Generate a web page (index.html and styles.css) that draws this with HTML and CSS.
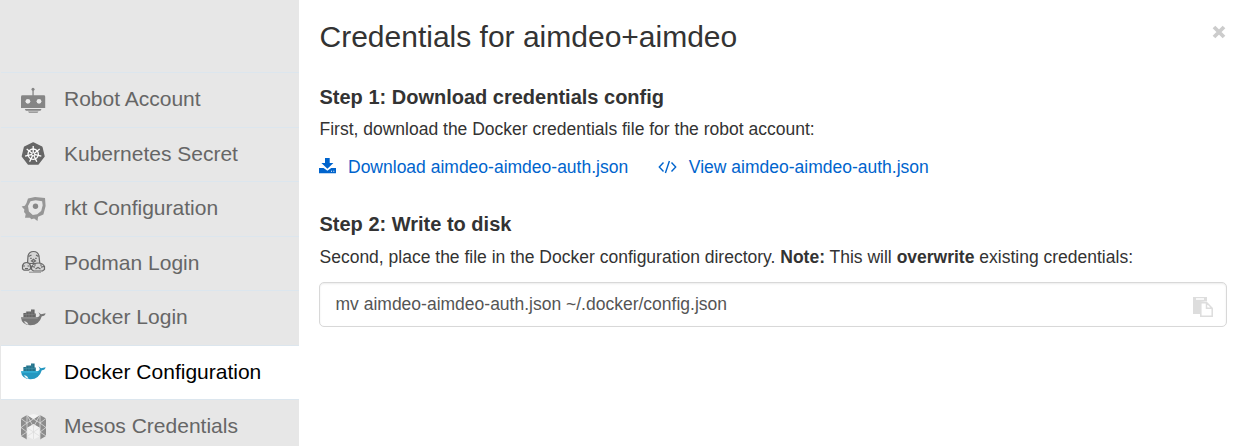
FILE: index.html
```html
<!DOCTYPE html>
<html lang="en">
<head>
<meta charset="utf-8">
<title>Credentials for aimdeo+aimdeo</title>
<link rel="stylesheet" href="styles.css">
</head>
<body>
<div class="dialog">
  <nav class="sidebar">
    <a class="tab"><svg class="tab-icon" viewBox="0 0 26 26"><g fill="#858585"><path d="M12.400 3h1.300v6h-1.300z"/><circle cx="13" cy="2.300" r="1.500"/><path d="M2.500 8.300h21.300q1.400 0 1.400 1.400v11.300H1V9.700q0-1.400 1.500-1.400z"/><path d="M4.800 22h16.700l-1 1.700H5.800zM8 24.400h10.500l-1 1.300H9z"/></g><g fill="#ebebeb"><circle cx="7.900" cy="14.300" r="2.400"/><circle cx="19" cy="14.300" r="2.400"/></g></svg><span class="tab-label">Robot Account</span></a>
    <a class="tab"><svg class="tab-icon" viewBox="0 0 26 26"><path fill="#666" stroke="#666" stroke-width="1.500" stroke-linejoin="round" d="M13.200 2l8.600 4.100 2.200 9.300-6 7.600H8.400l-6-7.600 2.200-9.300z"/><g fill="none" stroke="#fff" stroke-width="1.300"><circle cx="13.200" cy="13.200" r="5.200"/><path d="M13.200 13.200V4.900M13.200 13.200l6.500-5.200M13.200 13.200l8.100 1.850M13.200 13.200l3.600 7.500M13.200 13.200l-3.600 7.500M13.200 13.200l-8.100 1.850M13.200 13.200L6.700 8"/></g><circle cx="13.200" cy="13.200" r="1" fill="#666"/></svg><span class="tab-label">Kubernetes Secret</span></a>
    <a class="tab"><svg class="tab-icon" viewBox="0 0 26 26"><path fill="#969696" fill-rule="evenodd" d="M8 2.500l7-1.500 10 1 .6 8-2.200 8.500-5.300 2.300-.6 4.200-3.400-2.500-2.800.7-1.300-1.500-5 .1.700-3.900L4 16l.4-2.400-2.800-3.100 3.300-.8L6.500 7zM10.500 5.200L8 10l.9 5.500 3.900 3.500 4.400-.7 4-3.400 1.500-5.600-.6-4-6.500-1.100z"/><circle cx="15.500" cy="10.200" r="2.700" fill="#888"/></svg><span class="tab-label">rkt Configuration</span></a>
    <a class="tab"><svg class="tab-icon" viewBox="0 0 26 26"><g fill="#d5d5d5" stroke="#686868" stroke-width="1.200"><path d="M7.500 13.500L8 6q1-4.500 5.500-4.500T19 6l.8 7.500z"/><path d="M8.500 6.500l3-1.500M16 5l2.500 1.500M10.200 8.300h1.500M15.200 8.300h1.500M11.500 11l2-1.800 2 1.800-2 1.200z"/><path d="M2.500 19v-3.500q1-3 4-3t4 3V19l-2 1.200H4z"/><path d="M3 16h2M7.500 16h2M5 18.500h3"/><path d="M11.500 19.500v-3q2-3.500 6.700-3.500t6.300 3.500v3L22.500 21h-9z"/><path d="M12 16.500l3 .7M21 17.200l3-.7M15.500 19l2.500-1.500 2.500 1.500M14 15h2M20 15h2"/><path stroke="#999" d="M9 22.200h12"/></g></svg><span class="tab-label">Podman Login</span></a>
    <a class="tab"><svg class="tab-icon" viewBox="0 0 26 26"><path fill="#656565" d="M3.400 8h2.800V6.400H11V4.600h3.600v4h1.200v4.200H3.400z"/><path fill="#777" d="M1 12.300h15.500q3.300 0 3.200-2.800l-1.300-2.200 2.600 1.900 4.600-1q-.5 2.900-3.800 3-2.500 8.700-11.300 9.100Q1.500 20 1 12.300z"/><path fill="#929292" d="M1.500 12.300h16.200v1.300H1.500z"/><path fill="#ddd" d="M3.800 16.200q4 .3 4.700 3.700-3.300-.7-4.700-3.700z"/><path stroke="#8b8b8b" stroke-width=".5" d="M6.200 7v5M9 7v5M12 5v7M3.500 9.500h12"/></svg><span class="tab-label">Docker Login</span></a>
    <a class="tab active"><svg class="tab-icon" viewBox="0 0 26 26"><path fill="#22718b" d="M3.400 8h2.800V6.400H11V4.600h3.600v4h1.200v4.200H3.400z"/><path fill="#2497c0" d="M1 12.300h15.500q3.300 0 3.200-2.800l-1.300-2.200 2.600 1.900 4.600-1q-.5 2.900-3.800 3-2.500 8.700-11.300 9.100Q1.500 20 1 12.300z"/><path fill="#38b7dc" d="M1.500 12.300h16.200v1.300H1.500z"/><path fill="#e5f1f5" d="M3.800 16.200q4 .3 4.700 3.700-3.300-.7-4.700-3.700z"/><path stroke="#4d9aad" stroke-width=".5" d="M6.200 7v5M9 7v5M12 5v7M3.500 9.500h12"/></svg><span class="tab-label">Docker Configuration</span></a>
    <a class="tab"><svg class="tab-icon" viewBox="0 0 26 26"><path fill="#8c8c8c" d="M1 4.500L7 1l6.500 12L20 1l6 3.500V22l-6 3.500V13.500l-6.500 1L7 13.500v12L1 22z"/><path fill="#8c8c8c" d="M7 1l6.500 4L20 1v12.500l-6.500 1-6.500-1z"/><path fill="#f3f3f3" d="M8 1.500L13.500 0 19 1.500l-5.500 3.800zM7.500 13.500l6-3.500 6 3.500v9l-6 3-6-3z"/><path fill="none" stroke="#e7e7e7" stroke-width=".7" d="M1 4.500L7 9l-6 4.500L7 18l-6 4M7 1v24.500M20 1v24.500M26 4.500L20 9l6 4.500-6 4.500 6 4M7 9l6.500-4L20 9M7 1l6.500 12L20 1"/><path fill="none" stroke="#d6d6d6" stroke-width=".6" d="M7.500 14l6 4 6-4M7.500 22l6-4 6 4M13.500 11v14"/></svg><span class="tab-label">Mesos Credentials</span></a>
  </nav>
  <main class="content">
    <header class="header">
      <h1 class="title">Credentials for aimdeo+aimdeo</h1>
      <svg class="close" viewBox="0 0 14 14"><path d="M2 2l10 10M12 2L2 12" fill="none" stroke="#ccc" stroke-width="3.800"/></svg>
    </header>
    <h2 class="step first">Step 1: Download credentials config</h2>
    <p class="text">First, download the Docker credentials file for the robot account:</p>
    <div class="links">
      <a class="link"><svg class="download" viewBox="0 0 17 16"><path fill="#0064cd" fill-rule="evenodd" d="M6 0h4.700v5h3.700L8.400 10.700 2.400 5H6zM0 10h4.600l3.800 2.700 3.800-2.700H17v5.200H0zM12 12.800v1h1v-1zM14.300 12.800v1h1v-1z"/></svg><span>Download aimdeo-aimdeo-auth.json</span></a>
      <a class="link"><svg class="code" viewBox="0 0 19 14"><path fill="none" stroke="#0064cd" stroke-width="1.400" d="M5.500 2.500L1.300 7l4.200 4.500M13.500 2.500L17.700 7l-4.200 4.500M11.400 1l-4 12"/></svg><span>View aimdeo-aimdeo-auth.json</span></a>
    </div>
    <h2 class="step second">Step 2: Write to disk</h2>
    <p class="text text-second">Second, place the file in the Docker configuration directory. <b>Note:</b> This will <b>overwrite</b> existing credentials:</p>
    <div class="command"><span class="command-text">mv aimdeo-aimdeo-auth.json ~/.docker/config.json</span><svg class="copy" viewBox="0 0 20 20"><path fill="#ddd" fill-rule="evenodd" d="M0 0h14v4.500h-1.500L7 5v12H0zM3 1.200v1.600h8V1.200z"/><path fill="#fff" stroke="#ddd" stroke-width="1.500" d="M7.800 5.800h6l5.400 5.400v8H7.800zM13.500 6v5.300H19"/></svg></div>
  </main>
</div>
</body>
</html>
```
FILE: styles.css
```css
* { box-sizing: border-box; }
body {
  margin: 0;
  background: #fff;
  color: #333;
  font-family: "Liberation Sans", Arial, sans-serif;
  font-size: 17.5px;
}
.dialog { display: flex; height: 446px; overflow: hidden; }
.sidebar {
  flex: 0 0 299px;
  display: flex;
  flex-direction: column;
  padding: 72px 0 0 1px;
  background: #e7e7e7;
}
.tab {
  flex: 0 0 54.5px;
  display: flex;
  align-items: center;
  padding-left: 19px;
  border-top: 1px solid #dce6ee;
  color: #666;
  font-size: 21px;
}
.tab.active { background: #fff; color: #000; }
.tab-icon { flex: none; width: 26px; height: 26px; margin-right: 18px; }
.tab-label { line-height: 24px; padding-bottom: 1px; white-space: nowrap; }
.content { flex: 1; padding: 16px 19px 0 20.5px; }
.header { display: flex; justify-content: space-between; height: 42px; }
.title { margin: 0; font-size: 30px; font-weight: 400; line-height: 42px; }
.close { width: 14px; height: 14px; margin: 9px 1px 0 0; }
.step { margin: 0; font-size: 20px; line-height: 28px; }
.first { margin-top: 25px; }
.text { margin: 5px 0 0; line-height: 26px; white-space: nowrap; }
.links { display: flex; gap: 29px; height: 26px; margin-top: 12px; }
.link { display: flex; align-items: center; color: #0064cd; line-height: 26px; }
.download { width: 17px; height: 16px; margin: -3px 12.500px 0 -1px; }
.code { width: 19px; height: 14px; margin: 0 12px 0 .7px; }
.second { margin-top: 30px; }
.text-second { margin-top: 6px; }
.command {
  display: flex;
  justify-content: space-between;
  height: 45px;
  margin: 12px 0 0 -1px;
  padding: 8px 13px 0 16px;
  border: 1px solid #d8d8d8;
  border-radius: 5px;
  box-shadow: inset 0 1px 2px rgba(0, 0, 0, .08);
  color: #555;
}
.command-text { line-height: 26px; }
.copy { width: 20px; height: 20px; margin-top: 6px; }
```
